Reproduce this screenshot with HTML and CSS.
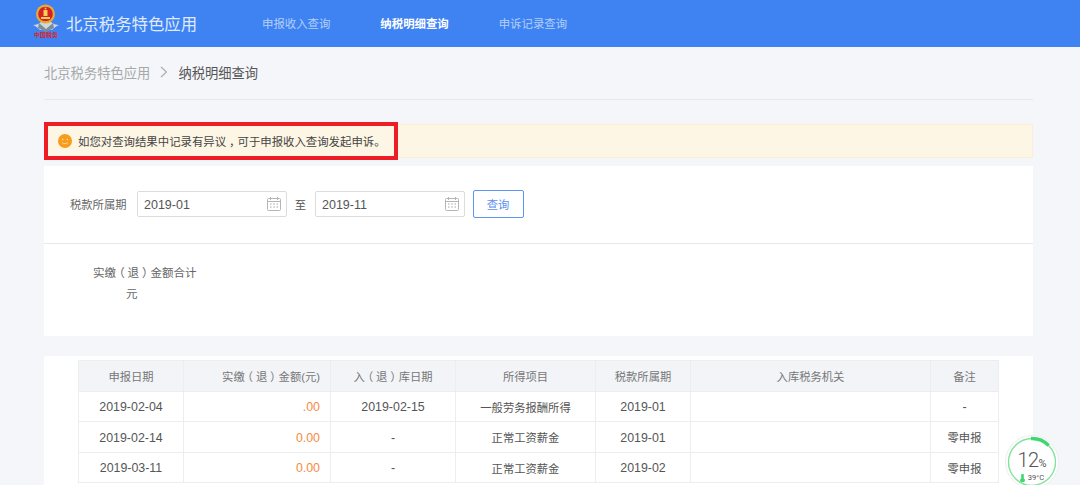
FILE: index.html
```html
<!DOCTYPE html>
<html lang="zh">
<head>
<meta charset="utf-8">
<title>纳税明细查询</title>
<link rel="stylesheet" href="styles.css">
</head>
<body>
<header class="topbar">
  <div class="brand">
    <div class="emblem">
      <svg width="26" height="29" viewBox="0 0 26 29">
        <path d="M0 21c3 0 6-1 8-3h10c2 2 5 3 8 3-3 1-5 3-7 5H7c-2-2-4-4-7-5z" fill="#cfd7df"/>
        <path d="M6 19l7 6 7-6 1 5-8 4-8-4z" fill="#7f8c97"/>
        <circle cx="12.500" cy="10" r="9.500" fill="#e6ac32"/>
        <circle cx="12.500" cy="10" r="7.300" fill="#d5202a"/>
        <path d="M8 13h9v2H8zM10.500 6h4v6h-4z" fill="#f3cf58"/>
        <circle cx="12.500" cy="4.500" r="1" fill="#f3cf58"/>
      </svg>
      <span class="emblem-text">中国税务</span>
    </div>
    <span class="brand-name">北京税务特色应用</span>
  </div>
  <nav class="nav">
    <a class="nav-item">申报收入查询</a>
    <a class="nav-item nav-active">纳税明细查询</a>
    <a class="nav-item">申诉记录查询</a>
  </nav>
</header>

<main class="page">
  <div class="crumbs">
    <span class="crumb-root">北京税务特色应用</span>
    <svg class="crumb-sep" width="8" height="12" viewBox="0 0 8 12"><path d="M1 1l5.500 5L1 11" fill="none" stroke="#aaa" stroke-width="1.100"/></svg>
    <span class="crumb-current">纳税明细查询</span>
  </div>

  <div class="notice">
    <svg class="smile" width="14" height="14" viewBox="0 0 14 14">
      <circle cx="7" cy="7" r="7" fill="#f89c1c"/>
      <circle cx="4.700" cy="5.500" r=".8" fill="#fde3b5"/>
      <circle cx="9.300" cy="5.500" r=".8" fill="#fde3b5"/>
      <path d="M4 8.500c1.500 1.600 4.500 1.600 6 0" fill="none" stroke="#fde3b5" stroke-width=".8"/>
    </svg>
    <span>如您对查询结果中记录有异议<span class="fw">，</span>可于申报收入查询发起申诉。</span>
    <div class="highlight"></div>
  </div>

  <section class="card query">
    <form class="filter">
      <label class="filter-label">税款所属期</label>
      <div class="date-input">
        <span>2019-01</span>
        <svg class="cal" width="14" height="14" viewBox="0 0 14 14"><use href="#cal"/></svg>
      </div>
      <span class="to">至</span>
      <div class="date-input">
        <span>2019-11</span>
        <svg class="cal" width="14" height="14" viewBox="0 0 14 14"><use href="#cal"/></svg>
      </div>
      <button class="btn" type="button">查询</button>
    </form>
    <div class="summary">
      <div class="summary-label">实缴<span class="fw">（</span>退<span class="fw">）</span>金额合计</div>
      <div class="summary-unit">元</div>
    </div>
  </section>

  <section class="card table-card">
    <table class="grid">
      <colgroup>
        <col class="c1"><col class="c2"><col class="c3"><col class="c4"><col class="c5"><col class="c6"><col class="c7">
      </colgroup>
      <thead>
        <tr><th>申报日期</th><th class="num">实缴<span class="fw">（</span>退<span class="fw">）</span>金额(元)</th><th>入<span class="fw">（</span>退<span class="fw">）</span>库日期</th><th>所得项目</th><th>税款所属期</th><th>入库税务机关</th><th>备注</th></tr>
      </thead>
      <tbody>
        <tr><td>2019-02-04</td><td class="num money">.00</td><td>2019-02-15</td><td class="zh">一般劳务报酬所得</td><td>2019-01</td><td></td><td>-</td></tr>
        <tr><td>2019-02-14</td><td class="num money">0.00</td><td>-</td><td class="zh">正常工资薪金</td><td>2019-01</td><td></td><td class="zh">零申报</td></tr>
        <tr><td>2019-03-11</td><td class="num money">0.00</td><td>-</td><td class="zh">正常工资薪金</td><td>2019-02</td><td></td><td class="zh">零申报</td></tr>
      </tbody>
    </table>
  </section>
</main>

<aside class="gauge">
  <svg class="gauge-ring" width="54" height="54" viewBox="0 0 54 54">
    <circle cx="27" cy="27" r="26.500" fill="#fff" stroke="#eceef0" stroke-width="1"/>
    <circle cx="27" cy="27" r="23.500" fill="none" stroke="#7fe39c" stroke-width="1.400"/>
    <path d="M26 3.500A23.500 23.500 0 0 1 43.600 10.400" fill="none" stroke="#3fd86e" stroke-width="3.500"/>
  </svg>
  <div class="gauge-text">
    <div class="gauge-pct"><span class="pct-num">12</span><span class="pct-sign">%</span></div>
    <div class="gauge-temp">
      <svg width="5" height="8" viewBox="0 0 5 8"><path d="M1.200 1a1.300 1.300 0 0 1 2.600 0v3.400a2.300 2.300 0 1 1-2.600 0z" fill="#3fd86e"/></svg>
      <span>39°C</span>
    </div>
  </div>
</aside>

<svg class="defs" width="0" height="0">
  <symbol id="cal" viewBox="0 0 14 14">
    <rect x=".5" y="1.500" width="13" height="12" rx="1" fill="none" stroke="#b5b5b5"/>
    <path d="M.5 4.500h13" stroke="#b5b5b5"/>
    <path d="M3.500 0v3M10.500 0v3" stroke="#b5b5b5"/>
    <path d="M3 7h1.500M6.300 7h1.500M9.500 7h1.500M3 10h1.500M6.300 10h1.500M9.500 10h1.500" stroke="#a5a5a5"/>
  </symbol>
</svg>
</body>
</html>
```

FILE: styles.css
```css
* { box-sizing: border-box; }
html, body { margin: 0; height: 485px; overflow: hidden; }
body {
  background: #f4f6fa;
  color: #555;
  font-family: "Liberation Sans", "Noto Sans CJK SC", sans-serif;
  font-size: 12px;
}
.fw {
  font-feature-settings: "halt";
  padding: 0 .25em;
}

.topbar {
  height: 47px;
  background: #3f83f3;
  display: flex;
  align-items: center;
  padding: 0 0 2px 33px;
}
.brand { display: flex; align-items: center; gap: 7px; width: 229px; }
.emblem {
  flex: none;
  width: 26px;
  height: 47px;
  padding-top: 4px;
  margin-top: 2px;
  text-align: center;
}
.emblem svg { display: block; }
.emblem-text {
  display: block;
  color: #d8242c;
  font-size: 6px;
  line-height: 7px;
  margin-top: -1px;
  font-weight: 700;
  white-space: nowrap;
}
.brand-name { color: #dfeafd; font-size: 16.400px; }
.nav { display: flex; gap: 50px; }
.nav-item { color: #b4cffa; font-size: 11.400px; }
.nav-active { color: #fff; font-weight: 700; }

.page { margin: 0 47px 0 44px; }
.crumbs {
  height: 53px;
  border-bottom: 1px solid #e6e8ec;
  display: flex;
  align-items: center;
  font-size: 13.300px;
  padding-bottom: 2px;
}
.crumb-root { color: #a8a8a8; }
.crumb-sep { margin: 0 10px 0 10px; }
.crumb-current { color: #555; }

.notice {
  position: relative;
  margin-top: 24px;
  height: 34px;
  background: #fdf6e4;
  border: 1px solid #faeed3;
  display: flex;
  align-items: center;
  gap: 6px;
  padding-left: 13px;
  color: #444;
  font-size: 11.400px;
}
.smile { flex: none; }
.highlight {
  position: absolute;
  left: -1px;
  top: -3px;
  width: 354px;
  height: 38px;
  border: 4px solid #ee1c25;
}

.card { background: #fff; }
.query { margin-top: 8px; height: 170px; }
.filter {
  height: 78px;
  border-bottom: 1px solid #e6e8ec;
  display: flex;
  align-items: center;
  padding: 0 0 2px 26px;
}
.filter-label { font-size: 11.300px; margin-right: 10px; color: #666; }
.date-input {
  width: 150px;
  height: 26px;
  border: 1px solid #dcdcdc;
  border-radius: 2px;
  display: flex;
  align-items: center;
  justify-content: space-between;
  padding: 2px 5px 0 6.500px;
  font-size: 12.500px;
  color: #555;
}
.cal { margin-top: -2px; }
.to { width: 28px; text-align: center; font-size: 11.300px; color: #555; }
.btn {
  margin-left: 8px;
  width: 51px;
  height: 28px;
  background: #fff;
  border: 1px solid #5b96f5;
  border-radius: 2px;
  color: #5b8ff0;
  font: inherit;
  font-size: 11.300px;
  padding: 0;
}
.summary { padding-top: 19px; font-size: 11.500px; color: #666; }
.summary-label { margin-left: 49px; line-height: 20px; white-space: nowrap; }
.summary-unit { margin-left: 82px; line-height: 22px; }

.table-card { margin-top: 20px; height: 200px; padding: 4px 34px 0; }
.grid {
  width: 920px;
  border-collapse: collapse;
  table-layout: fixed;
  font-size: 12.400px;
}
.c1 { width: 105px; } .c2 { width: 147px; } .c3 { width: 125px; } .c4 { width: 140px; }
.c5 { width: 95px; } .c6 { width: 240px; } .c7 { width: 68px; }
.grid th, .grid td {
  border: 1px solid #ebedf0;
  text-align: center;
  padding: 0;
  overflow: hidden;
  white-space: nowrap;
}
.grid th { height: 30.500px; background: #f2f4f8; font-weight: 400; color: #777; font-size: 11.300px; }
.grid td { height: 30.500px; color: #555; padding-top: 2px; }
.grid td.zh { font-size: 11.300px; padding-top: 1px; }
.grid .num { text-align: right; padding-right: 10px; }
.grid .money { color: #f58a42; }

.gauge {
  position: absolute;
  left: 1005px;
  top: 435px;
  width: 54px;
  height: 54px;
}
.gauge-ring { display: block; }
.gauge-text {
  position: absolute;
  left: 0;
  top: 15px;
  width: 54px;
  text-align: center;
  color: #555;
  font-family: Roboto, "Liberation Sans", sans-serif;
}
.gauge-pct { line-height: 20px; }
.pct-num { font-size: 20px; font-weight: 300; letter-spacing: -.5px; }
.pct-sign { font-size: 11px; }
.gauge-temp {
  font-size: 7.600px;
  line-height: 10px;
  margin-top: -1px;
  display: flex;
  justify-content: center;
  align-items: center;
  gap: 3px;
}
.defs { position: absolute; }
```
